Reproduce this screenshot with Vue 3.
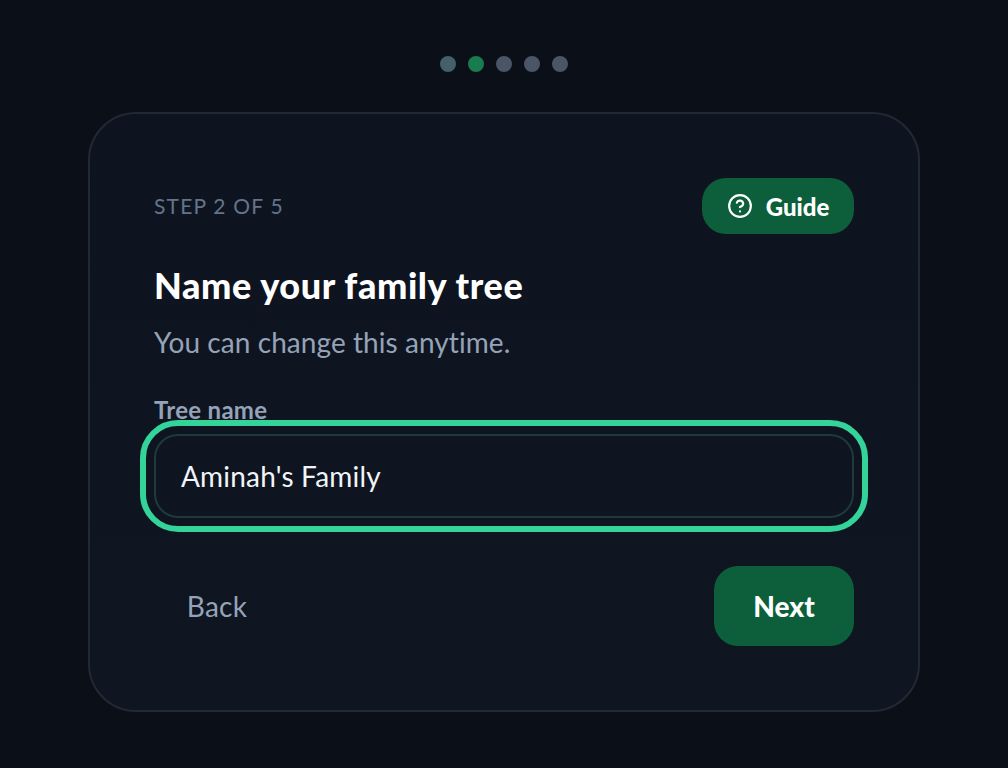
<template>
  <div class="page">
    <div class="dots">
      <span
        v-for="(dot, i) in dots"
        :key="i"
        :class="['dot', dot]"
      ></span>
    </div>

    <div class="card">
      <div class="top-row">
        <span class="step">STEP 2 OF 5</span>
        <button class="guide-btn">
          <svg class="guide-icon" viewBox="0 0 24 24" fill="none" stroke="currentColor" stroke-width="2" stroke-linecap="round" stroke-linejoin="round">
            <circle cx="12" cy="12" r="10" />
            <path d="M9.09 9a3 3 0 0 1 5.83 1c0 2-3 3-3 3" />
            <path d="M12 17h.01" />
          </svg>
          Guide
        </button>
      </div>

      <h1 class="title">Name your family tree</h1>
      <p class="subtitle">You can change this anytime.</p>

      <label class="field-label" for="tree-name">Tree name</label>
      <input id="tree-name" v-model="treeName" class="field-input" type="text" />

      <div class="actions">
        <button class="back-btn">Back</button>
        <button class="next-btn">Next</button>
      </div>
    </div>
  </div>
</template>

<script setup>
import { ref } from 'vue'

const dots = ['done', 'active', 'todo', 'todo', 'todo']
const treeName = ref("Aminah's Family")
</script>

<style>
html,
body {
  margin: 0;
  background: #0a0f18;
}
</style>

<style scoped>
.page {
  box-sizing: border-box;
  height: 768px;
  padding-top: 56px;
  background: #0a0f18;
  font-family: Lato, "Open Sans", sans-serif;
  display: flex;
  flex-direction: column;
  align-items: center;
}

.dots {
  display: flex;
  gap: 12px;
  margin-bottom: 40px;
}

.dot {
  width: 16px;
  height: 16px;
  border-radius: 50%;
  background: #4a5568;
}

.dot.done {
  background: #44606a;
}

.dot.active {
  background: #1a7a50;
}

.card {
  box-sizing: border-box;
  width: 832px;
  height: 600px;
  padding: 64px;
  background: linear-gradient(180deg, #0e141f 0%, #0f1521 100%);
  border: 2px solid #232934;
  border-radius: 48px;
  display: flex;
  flex-direction: column;
}

.top-row {
  display: flex;
  justify-content: space-between;
  align-items: center;
  height: 56px;
}

.step {
  font-size: 21px;
  letter-spacing: 1.2px;
  color: #64748b;
  margin-top: -2px;
}

.guide-btn {
  display: flex;
  align-items: center;
  justify-content: center;
  gap: 13px;
  width: 152px;
  height: 56px;
  border: none;
  border-radius: 24px;
  background: #0d5f3b;
  color: #fff;
  font-family: inherit;
  font-size: 24px;
  font-weight: 900;
}

.guide-icon {
  width: 26px;
  height: 26px;
}

.title {
  margin: 29px 0 0;
  font-size: 36px;
  line-height: 44px;
  font-weight: 900;
  letter-spacing: 0.6px;
  color: #fff;
}

.subtitle {
  margin: 17px 0 0;
  font-size: 28px;
  line-height: 36px;
  letter-spacing: 0.07px;
  color: #94a3b8;
}

.field-label {
  margin-top: 36px;
  font-size: 24px;
  line-height: 28px;
  font-weight: 700;
  letter-spacing: 0.3px;
  color: #94a3b8;
}

.field-input {
  box-sizing: border-box;
  width: 100%;
  height: 84px;
  flex-shrink: 0;
  margin-top: 10px;
  padding: 0 25px;
  background: transparent;
  border: 2px solid #1f3a3a;
  border-radius: 24px;
  outline: 6px solid #34d399;
  outline-offset: 8px;
  color: #f1f5f9;
  font-family: inherit;
  font-size: 28px;
  letter-spacing: 0.2px;
}

.actions {
  display: flex;
  justify-content: space-between;
  align-items: center;
  margin-top: 48px;
}

.back-btn {
  width: 126px;
  height: 80px;
  border: none;
  background: none;
  color: #94a3b8;
  font-family: inherit;
  font-size: 28px;
  letter-spacing: 0.3px;
}

.next-btn {
  width: 140px;
  height: 80px;
  border: none;
  border-radius: 24px;
  background: #0d5f3b;
  color: #fff;
  font-family: inherit;
  font-size: 28px;
  font-weight: 900;
}
</style>
